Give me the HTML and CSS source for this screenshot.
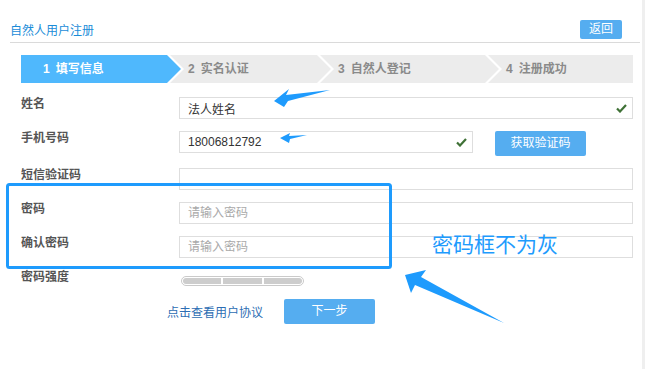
FILE: index.html
```html
<!DOCTYPE html>
<html>
<head>
<title>自然人用户注册</title>
<meta charset="utf-8"/>
<link rel="stylesheet" href="styles.css">
</head>
<body>

<div class="page">
  <div class="head">
    <h1>自然人用户注册</h1>
    <a class="btn btn-back" href="javascript:;">返回</a>
  </div>

  <ul class="steps">
    <li class="step step-1 on"><span>1</span>填写信息</li>
    <li class="step step-2"><span>2</span>实名认证</li>
    <li class="step step-3"><span>3</span>自然人登记</li>
    <li class="step step-4"><span>4</span>注册成功</li>
  </ul>

  <form class="form">
    <div class="row">
      <label>姓名</label>
      <div class="field">
        <input type="text" value="法人姓名">
        <svg class="ok" width="11" height="9" viewBox="0 0 11 9"><path d="M1 4.5 L4 7.5 L10 1" fill="none" stroke="#3f7136" stroke-width="2.2"/></svg>
      </div>
    </div>
    <div class="row">
      <label>手机号码</label>
      <div class="field field-short">
        <input type="text" value="18006812792">
        <svg class="ok" width="11" height="9" viewBox="0 0 11 9"><path d="M1 4.5 L4 7.5 L10 1" fill="none" stroke="#3f7136" stroke-width="2.2"/></svg>
      </div>
      <a class="btn btn-code" href="javascript:;">获取验证码</a>
    </div>
    <div class="row">
      <label>短信验证码</label>
      <div class="field"><input type="text"></div>
    </div>
    <div class="row">
      <label>密码</label>
      <div class="field"><input type="password" placeholder="请输入密码"></div>
    </div>
    <div class="row">
      <label>确认密码</label>
      <div class="field"><input type="password" placeholder="请输入密码"></div>
    </div>
    <div class="row">
      <label>密码强度</label>
      <div class="strength"><i></i><i></i><i></i></div>
    </div>
    <div class="foot">
      <a class="link" href="javascript:;">点击查看用户协议</a>
      <a class="btn btn-next" href="javascript:;">下一步</a>
    </div>
  </form>

  <!-- annotation drawn over the page -->
  <div class="mark">
    <svg width="645" height="369" viewBox="0 0 645 369">
      <rect x="7.5" y="184.5" width="383" height="83" rx="2" fill="none" stroke="#1e9bfd" stroke-width="3"/>
      <polygon points="274,101 289,89 286,95 330,90 288,101 284,107" fill="#1e9bfd"/>
      <polygon points="280,138 290,133 289,136 307,135 290,139 289,143" fill="#1e9bfd"/>
      <polygon points="405,275 426,270 421,277 504,323 415,285 411,293" fill="#1e9bfd"/>
    </svg>
    <div class="mark-text">密码框不为灰</div>
  </div>
</div>

</body>
</html>
```

FILE: styles.css
```css
body {
    margin: 0;
    font-family: "Liberation Sans", "Noto Sans CJK SC", sans-serif;
    font-size: 12px;
    color: #333;
    background: #fff;
}
a { text-decoration: none; }
ul { list-style: none; margin: 0; padding: 0; }

.page {
    position: relative;
    width: 645px;
    height: 369px;
    box-sizing: border-box;
    padding-left: 10px;
    border-right: 3px solid #efefef;
}

.head {
    display: flex;
    align-items: center;
    justify-content: space-between;
    height: 26px;
    padding-top: 16px;
    margin-right: 2px;
    border-bottom: 1px solid #dadada;
}
.head h1 { margin: 0; font-size: 12px; font-weight: normal; color: #1a8cd8; }

.btn {
    display: block;
    background: #55adf0;
    color: #fff;
    text-align: center;
    border-radius: 2px;
}
.btn-back { width: 42px; height: 19px; line-height: 19px; margin-right: 18px; }

.steps { display: flex; height: 28px; margin: 12px 0 0 11px; }
.step {
    height: 28px;
    line-height: 28px;
    padding-left: 18px;
    box-sizing: border-box;
    background: #ececec;
    color: #8a8a8a;
    font-weight: bold;
    margin-left: -11px;
    clip-path: polygon(0 0, calc(100% - 14px) 0, 100% 50%, calc(100% - 14px) 100%, 0 100%, 14px 50%);
}
.step span { margin-right: 6px; }
.step-1 { width: 160px; margin-left: 0; padding-left: 22px; clip-path: polygon(0 0, calc(100% - 14px) 0, 100% 50%, calc(100% - 14px) 100%, 0 100%); }
.step-2 { width: 161px; }
.step-3 { width: 179px; }
.step-4 { width: 145px; clip-path: polygon(0 0, 100% 0, 100% 100%, 0 100%, 14px 50%); }
.step.on { background: #4fb8fd; color: #fff; }

.form { margin: 14px 0 0; padding-left: 11px; }
.row { display: flex; align-items: flex-start; margin-bottom: 12px; }
.row label {
    width: 158px;
    line-height: 12px;
    padding-top: 1px;
    font-weight: bold;
    color: #555;
}
.field { position: relative; width: 454px; }
.field-short { width: 294px; }
.field input {
    display: block;
    width: 100%;
    height: 22px;
    box-sizing: border-box;
    border: 1px solid #dedede;
    padding: 0 8px;
    margin: 0;
    font-family: "Liberation Sans", "Noto Sans CJK SC", sans-serif;
    font-size: 12px;
    color: #333;
    outline: none;
}
.field input::placeholder { color: #a9a9a9; }
.ok { position: absolute; right: 6px; top: 7px; }

.btn-code { width: 91px; height: 25px; line-height: 25px; margin-left: 22px; }

.strength {
    display: flex;
    gap: 2px;
    width: 123px;
    height: 10px;
    box-sizing: border-box;
    margin: 6px 0 0 2px;
    padding: 1px;
    border: 1px solid #cacaca;
    border-radius: 5px;
}
.strength i { flex: 1; background: #cdcdcd; }
.strength i:first-child { border-radius: 3px 0 0 3px; }
.strength i:last-child { border-radius: 0 3px 3px 0; }

.foot { display: flex; align-items: center; margin: 13px 0 0 146px; }
.link { color: #2c6db3; }
.btn-next { width: 91px; height: 25px; line-height: 25px; margin-left: 21px; }

.mark { position: absolute; left: 0; top: 0; width: 645px; height: 369px; pointer-events: none; }
.mark svg { display: block; }
.mark-text {
    position: absolute;
    left: 432px;
    top: 233px;
    font-size: 21px;
    line-height: 24px;
    color: #1e9bfd;
}
```
